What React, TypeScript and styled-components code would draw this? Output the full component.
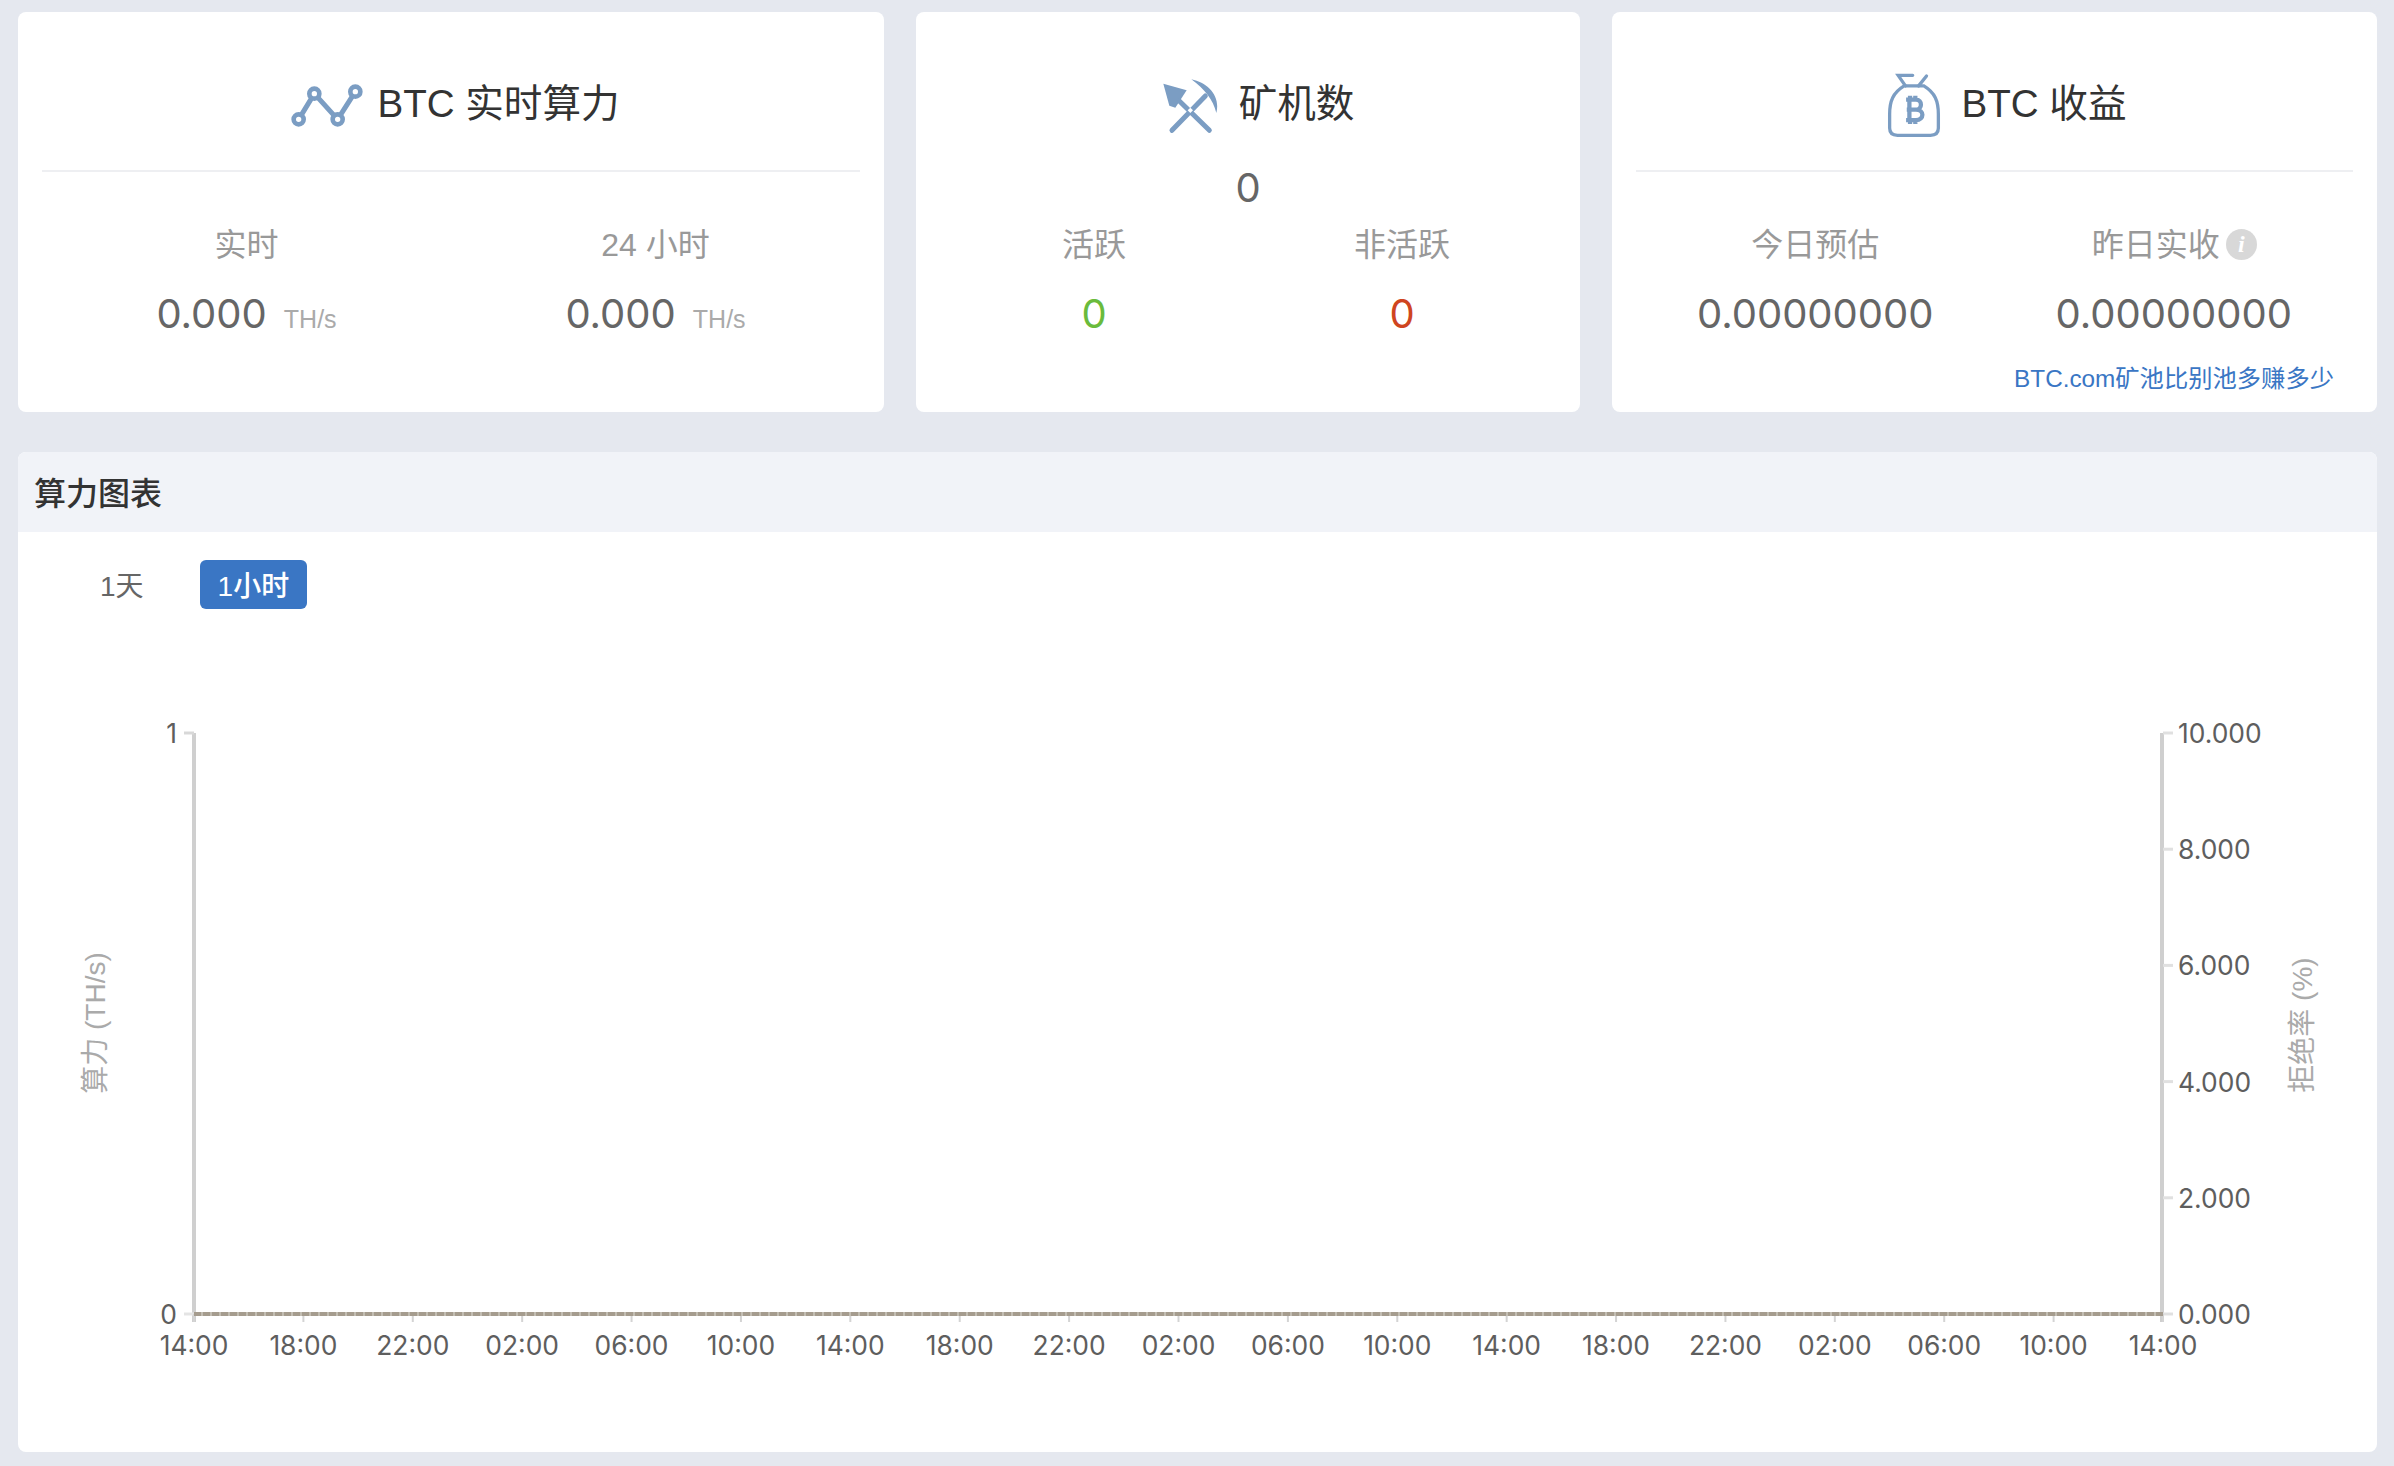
import React from "react";
import styled, { createGlobalStyle } from "styled-components";

const Global = createGlobalStyle`
  html, body { margin: 0; padding: 0; background: #e5e8ef; }
  body { font-family: "Liberation Sans", "Noto Sans CJK SC", sans-serif; }
`;

const Page = styled.div`
  display: flex;
  flex-direction: column;
  gap: 40px;
  padding: 12px 17px 14px 18px;
  width: 2394px;
  height: 1466px;
  box-sizing: border-box;
`;

const TopRow = styled.div`
  display: grid;
  grid-template-columns: 866px 664px 765px;
  gap: 32px;
`;

const Card = styled.section`
  height: 400px;
  padding: 0 24px;
  box-sizing: border-box;
  background: #fff;
  border-radius: 8px;
`;

const CardHead = styled.header<{ $divided: boolean; $shift: number; $gap: number }>`
  height: 160px;
  box-sizing: border-box;
  padding: 25px 0 0 ${(p) => p.$shift}px;
  display: flex;
  align-items: center;
  justify-content: center;
  gap: ${(p) => p.$gap}px;
  border-bottom: 2px solid ${(p) => (p.$divided ? "#eeeff2" : "transparent")};
`;

const CardTitle = styled.h2`
  margin: 0;
  font-size: 38.6px;
  font-weight: 400;
  color: #333;
  line-height: 50px;
  white-space: pre;
`;

const Glyph = styled.svg`
  height: 90px;
  flex: none;
  color: #7b9dc3;
`;

const Total = styled.div`
  height: 51px;
  line-height: 32px;
  text-align: center;
  font-family: Inter, "Liberation Sans", sans-serif;
  font-size: 40px;
  color: #666;
`;

const Stats = styled.div<{ $flush?: boolean }>`
  display: grid;
  grid-template-columns: 1fr 1fr;
  padding-top: ${(p) => (p.$flush ? 0 : 51)}px;
`;

const Stat = styled.div`
  text-align: center;
`;

const StatLabel = styled.div`
  display: flex;
  justify-content: center;
  align-items: center;
  gap: 6px;
  height: 44px;
  line-height: 44px;
  font-size: 32px;
  color: #999;
`;

const InfoDot = styled.span`
  width: 31px;
  height: 31px;
  margin: -2px -1px 0 0;
  border-radius: 50%;
  background: #d8d8d8;
  color: #fff;
  font: italic 700 24px/31px "Liberation Serif", serif;
  text-align: center;
`;

const StatValue = styled.div<{ $tone?: string }>`
  margin-top: 17px;
  height: 60px;
  line-height: 60px;
  font-family: Inter, "Liberation Sans", sans-serif;
  font-size: 40px;
  color: ${(p) => p.$tone ?? "#666"};
`;

const Unit = styled.span`
  margin-left: 17px;
  font-family: "Liberation Sans", sans-serif;
  font-size: 25px;
  color: #aaa;
`;

const CompareLink = styled.a`
  display: block;
  margin-top: 20px;
  padding-right: 19px;
  line-height: 30px;
  text-align: right;
  font-size: 24.3px;
  color: #3a76c4;
`;

const ChartPanel = styled.section`
  height: 1000px;
  background: #fff;
  border-radius: 8px;
  overflow: hidden;
`;

const PanelHead = styled.header`
  height: 80px;
  padding: 0 0 3px 16px;
  box-sizing: border-box;
  display: flex;
  align-items: center;
  background: #f1f3f8;
  font-size: 32px;
  font-weight: 500;
  color: #333;
`;

const RangeTabs = styled.div`
  display: flex;
  gap: 38px;
  padding: 28px 0 0 64px;
`;

const RangeTab = styled.button<{ $active?: boolean }>`
  height: 49px;
  padding: 0 18px 2px;
  border: 0;
  border-radius: 6px;
  font-family: inherit;
  font-size: 28px;
  font-weight: ${(p) => (p.$active ? 500 : 400)};
  background: ${(p) => (p.$active ? "#3a76c4" : "transparent")};
  color: ${(p) => (p.$active ? "#fff" : "#666")};
`;

const ChartSvg = styled.svg`
  display: block;
  margin-top: 31px;
`;

const TickText = styled.text`
  font-family: Inter, "Liberation Sans", sans-serif;
  font-size: 26.4px;
  fill: #5e5e5e;
  dominant-baseline: central;
`;

const AxisTitle = styled.text`
  font-size: 28px;
  fill: #aaa;
  text-anchor: middle;
  dominant-baseline: central;
`;

const X0 = 194;
const X1 = 2163;
const YT = 733;
const YB = 1314;
const xLabels = ["14:00", "18:00", "22:00", "02:00", "06:00", "10:00", "14:00", "18:00", "22:00", "02:00", "06:00", "10:00", "14:00", "18:00", "22:00", "02:00", "06:00", "10:00", "14:00"];
const rightLabels = ["10.000", "8.000", "6.000", "4.000", "2.000", "0.000"];

const LineIcon = () => (
  <Glyph viewBox="62 24 222 270" width={74} fill="none" stroke="currentColor">
    <path d="M88 205 L135 128 L205 205 L258 122" strokeWidth="15" />
    {[[88, 205], [135, 128], [205, 205], [258, 122]].map(([cx, cy]) => (
      <circle key={cx} cx={cx} cy={cy} r="15" fill="#fff" strokeWidth="14" />
    ))}
  </Glyph>
);

const MinerIcon = () => (
  <Glyph viewBox="62 24 168 270" width={56}>
    <path d="M66 98 L136 118 L102 170 L84 164 Z" fill="currentColor" />
    <path d="M150 85 C200 95 238 135 225 186 C215 145 190 115 150 85 Z" fill="currentColor" />
    <path d="M114 150 L204 238 M192 135 L92 238" stroke="currentColor" strokeWidth="15" strokeLinecap="round" fill="none" />
    <path d="M147 170 L155 178 L147 186 L139 178 Z" fill="#fff" />
  </Glyph>
);

const BagIcon = () => (
  <Glyph viewBox="52 24 164 270" width={54} fill="none" stroke="currentColor" strokeWidth="10">
    <path d="M104 104 C70 125 60 150 60 190 L60 232 C60 248 70 254 84 254 L184 254 C198 254 208 248 208 232 L208 190 C208 150 198 125 164 104 Z" />
    <path d="M130 72 L86 72 L108 104 M172 74 L148 104" strokeLinecap="round" />
    <path d="M110 146 L140 146 C160 146 160 176 140 176 L112 176 M140 176 C166 176 166 208 140 208 L110 208 M120 146 L120 208 M122 134 L122 146 M138 134 L138 146 M122 208 L122 220 M138 208 L138 220" strokeWidth="13" />
  </Glyph>
);

export default function App() {
  const step = (X1 - X0) / (xLabels.length - 1);
  const rStep = (YB - YT) / (rightLabels.length - 1);
  return (
    <Page>
      <Global />
      <TopRow>
        <Card>
          <CardHead $divided $shift={8} $gap={13}>
            <LineIcon />
            <CardTitle>BTC 实时算力</CardTitle>
          </CardHead>
          <Stats>
            <Stat>
              <StatLabel>实时</StatLabel>
              <StatValue>0.000<Unit>TH/s</Unit></StatValue>
            </Stat>
            <Stat>
              <StatLabel>24 小时</StatLabel>
              <StatValue>0.000<Unit>TH/s</Unit></StatValue>
            </Stat>
          </Stats>
        </Card>
        <Card>
          <CardHead $divided={false} $shift={20} $gap={21}>
            <MinerIcon />
            <CardTitle>矿机数</CardTitle>
          </CardHead>
          <Total>0</Total>
          <Stats $flush>
            <Stat>
              <StatLabel>活跃</StatLabel>
              <StatValue $tone="#6abb3c">0</StatValue>
            </Stat>
            <Stat>
              <StatLabel>非活跃</StatLabel>
              <StatValue $tone="#cf4520">0</StatValue>
            </Stat>
          </Stats>
        </Card>
        <Card>
          <CardHead $divided $shift={25} $gap={20}>
            <BagIcon />
            <CardTitle>BTC 收益</CardTitle>
          </CardHead>
          <Stats>
            <Stat>
              <StatLabel>今日预估</StatLabel>
              <StatValue>0.00000000</StatValue>
            </Stat>
            <Stat>
              <StatLabel>昨日实收<InfoDot>i</InfoDot></StatLabel>
              <StatValue>0.00000000</StatValue>
            </Stat>
          </Stats>
          <CompareLink>BTC.com矿池比别池多赚多少</CompareLink>
        </Card>
      </TopRow>
      <ChartPanel>
        <PanelHead>算力图表</PanelHead>
        <RangeTabs>
          <RangeTab>1天</RangeTab>
          <RangeTab $active>1小时</RangeTab>
        </RangeTabs>
        <ChartSvg width={2359} height={780} viewBox="18 640 2359 780">
          <line x1={X0} y1={YT} x2={X0} y2={YB + 8} stroke="#cfcfcf" strokeWidth="4" />
          <line x1={X1 - 1} y1={YT} x2={X1 - 1} y2={YB + 8} stroke="#cfcfcf" strokeWidth="4" />
          <line x1={184} y1={YT} x2={X0} y2={YT} stroke="#d8d8d8" strokeWidth="3" />
          <line x1={184} y1={YB} x2={X0} y2={YB} stroke="#e4e4e4" strokeWidth="3" />
          <TickText x={177} y={YT} textAnchor="end">1</TickText>
          <TickText x={177} y={YB} textAnchor="end">0</TickText>
          {rightLabels.map((t, i) => (
            <g key={t}>
              <line x1={X1} y1={YT + i * rStep} x2={X1 + 10} y2={YT + i * rStep} stroke="#e0e0e0" strokeWidth="3" />
              <TickText x={2178} y={YT + i * rStep}>{t}</TickText>
            </g>
          ))}
          {xLabels.map((t, i) => (
            <g key={i}>
              <line x1={X0 + i * step} y1={YB} x2={X0 + i * step} y2={YB + 8} stroke="#d4d4d4" strokeWidth="2" />
              <TickText x={X0 + i * step} y={1345} textAnchor="middle">{t}</TickText>
            </g>
          ))}
          <line x1={X0} y1={YB} x2={X1} y2={YB} stroke="#c2bdb2" strokeWidth="4" />
          <line x1={X0} y1={YB} x2={X1} y2={YB} stroke="#a59c8e" strokeWidth="4" strokeDasharray="7 2" />
          <AxisTitle x={95} y={1023} transform="rotate(-90 95 1023)">算力 (TH/s)</AxisTitle>
          <AxisTitle x={2302} y={1025} transform="rotate(-90 2302 1025)">拒绝率 (%)</AxisTitle>
        </ChartSvg>
      </ChartPanel>
    </Page>
  );
}
